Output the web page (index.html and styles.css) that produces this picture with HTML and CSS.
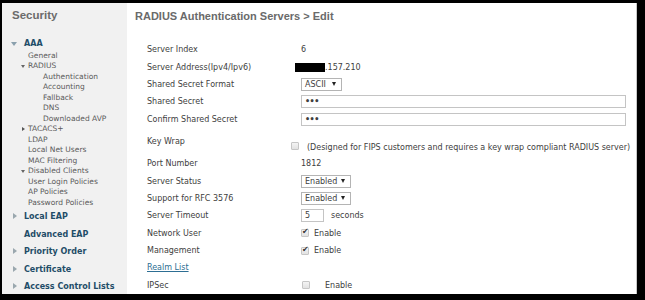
FILE: index.html
```html
<!DOCTYPE html>
<html lang="en">
<head>
    <meta charset="UTF-8">
    <title>RADIUS Authentication Servers &gt; Edit</title>
    <link rel="stylesheet" href="styles.css">
</head>
<body>
    <div class="frame">
        <!-- left navigation -->
        <div class="sidebar">
            <div class="side-title">Security</div>
            <div class="section open"><span class="caret down"></span>AAA</div>
            <ul class="nav">
                <li>General</li>
                <li><span class="caret down small"></span>RADIUS</li>
                <li class="sub">Authentication</li>
                <li class="sub">Accounting</li>
                <li class="sub">Fallback</li>
                <li class="sub">DNS</li>
                <li class="sub">Downloaded AVP</li>
                <li><span class="caret right small"></span>TACACS+</li>
                <li>LDAP</li>
                <li>Local Net Users</li>
                <li>MAC Filtering</li>
                <li><span class="caret down small"></span>Disabled Clients</li>
                <li>User Login Policies</li>
                <li>AP Policies</li>
                <li>Password Policies</li>
            </ul>
            <div class="section"><span class="caret right"></span>Local EAP</div>
            <div class="section">Advanced EAP</div>
            <div class="section"><span class="caret right"></span>Priority Order</div>
            <div class="section"><span class="caret right"></span>Certificate</div>
            <div class="section"><span class="caret right"></span>Access Control Lists</div>
        </div>

        <!-- edit form -->
        <div class="content">
            <h1>RADIUS Authentication Servers &gt; Edit</h1>
            <div class="form">
                <div class="row"><span class="label">Server Index</span><span class="value">6</span></div>
                <div class="row"><span class="label">Server Address(Ipv4/Ipv6)</span><span class="value"><span class="redact"></span>.157.210</span></div>
                <div class="row"><span class="label">Shared Secret Format</span><span class="value"><span class="select ascii">ASCII<span class="arrow"></span></span></span></div>
                <div class="row"><span class="label">Shared Secret</span><span class="value"><span class="input wide">&bull;&bull;&bull;</span></span></div>
                <div class="row"><span class="label">Confirm Shared Secret</span><span class="value"><span class="input wide">&bull;&bull;&bull;</span></span></div>
                <div class="row tall">
                    <span class="label">Key Wrap</span>
                    <span class="value keywrap"><span class="check"></span><span class="note">(Designed for FIPS customers and requires a key wrap compliant RADIUS server)</span></span>
                </div>
                <div class="row"><span class="label">Port Number</span><span class="value">1812</span></div>
                <div class="row"><span class="label">Server Status</span><span class="value"><span class="select">Enabled<span class="arrow"></span></span></span></div>
                <div class="row"><span class="label">Support for RFC 3576</span><span class="value"><span class="select">Enabled<span class="arrow"></span></span></span></div>
                <div class="row"><span class="label">Server Timeout</span><span class="value"><span class="input short">5</span><span class="unit">seconds</span></span></div>
                <div class="row"><span class="label">Network User</span><span class="value"><span class="check on"></span>Enable</span></div>
                <div class="row"><span class="label">Management</span><span class="value"><span class="check on"></span>Enable</span></div>
                <div class="row"><a class="label link" href="#">Realm List</a></div>
                <div class="row"><span class="label">IPSec</span><span class="value"><span class="check off"></span><span class="ipsec">Enable</span></span></div>
            </div>
        </div>
    </div>
</body>
</html>
```

FILE: styles.css
```css
body {
    margin: 0;
    background: #000;
    font-family: 'DejaVu Sans', Verdana, sans-serif;
    overflow: hidden;
}

.frame {
    margin: 3px 0 0 2px;
    width: 634px;
    height: 291px;
    display: flex;
    background: #fff;
    border-right: 1px solid #c8c8c8;
    overflow: hidden;
}

/* sidebar */
.sidebar {
    width: 125px;
    flex-shrink: 0;
    background: #f1f1f1;
    padding-top: 4px;
}

.side-title {
    font-family: 'Liberation Sans', Arial, sans-serif;
    font-weight: bold;
    font-size: 11.5px;
    line-height: 16px;
    color: #6b6b6b;
    padding-left: 10px;
    margin-bottom: 15px;
}

.section {
    position: relative;
    font-weight: bold;
    font-size: 8px;
    line-height: 17.5px;
    color: #1f4d68;
    padding-left: 22px;
}

.section.open {
    line-height: 11px;
}

.nav {
    list-style: none;
    margin: 0;
    padding: 1.5px 0 0 26px;
    font-size: 7.5px;
    line-height: 10.5px;
    color: #5a5a5a;
}

.nav li {
    position: relative;
}

.nav li.sub {
    padding-left: 15px;
}

.caret {
    position: absolute;
    width: 0;
    height: 0;
}

.section .caret.down {
    left: 9px;
    top: 4px;
    border-left: 3px solid transparent;
    border-right: 3px solid transparent;
    border-top: 4px solid #8aa0ad;
}

.section .caret.right {
    left: 11px;
    top: 5px;
    border-top: 3.5px solid transparent;
    border-bottom: 3.5px solid transparent;
    border-left: 4px solid #9aa7ae;
}

.nav .caret.down {
    left: -7px;
    top: 4px;
    border-left: 2.5px solid transparent;
    border-right: 2.5px solid transparent;
    border-top: 3px solid #666;
}

.nav .caret.right {
    left: -6px;
    top: 3px;
    border-top: 2.5px solid transparent;
    border-bottom: 2.5px solid transparent;
    border-left: 3px solid #555;
}

/* main area */
.content {
    flex: 1;
    padding-left: 8px;
}

.content h1 {
    font-family: 'Liberation Sans', Arial, sans-serif;
    font-size: 11px;
    font-weight: bold;
    color: #6a6a6a;
    margin: 0;
    padding-top: 7px;
    line-height: 13px;
}

.form {
    margin-top: 18px;
    padding-left: 12px;
    font-size: 8px;
    color: #404040;
}

.row {
    display: flex;
    align-items: center;
    height: 17.4px;
}

.row.tall {
    height: 27px;
    align-items: flex-start;
}

.label {
    width: 154px;
    flex-shrink: 0;
}

.row.tall .label {
    margin-top: 9px;
}

.link {
    color: #2d6e93;
    text-decoration: underline;
}

.value {
    display: flex;
    align-items: center;
}

.redact {
    display: inline-block;
    width: 30px;
    height: 9px;
    background: #000;
    margin-left: -6px;
}

.select {
    position: relative;
    display: inline-block;
    box-sizing: border-box;
    height: 13px;
    line-height: 11px;
    padding-left: 3px;
    border: 1px solid #b4b4b4;
    background: #fff;
    width: 50px;
}

.select.ascii {
    width: 41px;
}

.arrow {
    position: absolute;
    right: 5px;
    top: 3px;
    width: 0;
    height: 0;
    border-left: 2.5px solid transparent;
    border-right: 2.5px solid transparent;
    border-top: 4px solid #222;
}

.input {
    display: inline-block;
    box-sizing: border-box;
    height: 13px;
    line-height: 11px;
    padding-left: 3px;
    border: 1px solid #c4c4c4;
    background: #fff;
}

.input.wide {
    width: 325px;
    font-size: 8px;
    font-weight: bold;
    letter-spacing: -0.5px;
}

.input.short {
    width: 23px;
}

.unit {
    margin-left: 7px;
}

.check {
    display: inline-block;
    box-sizing: border-box;
    width: 8px;
    height: 8px;
    border: 1px solid #c6c6c6;
    border-radius: 1px;
    background: linear-gradient(#f4f4f4, #e2e2e2);
    margin-right: 5px;
    position: relative;
}

.check.on::after {
    content: "\2714";
    position: absolute;
    left: 0;
    top: -3px;
    font-size: 8px;
    color: #333;
}

.keywrap {
    margin-left: -10px;
    margin-top: 12px;
}

.keywrap .note {
    margin-top: 3px;
    margin-left: 3px;
}

.check.off {
    margin-left: 1px;
}

.ipsec {
    margin-left: 10px;
}
```
